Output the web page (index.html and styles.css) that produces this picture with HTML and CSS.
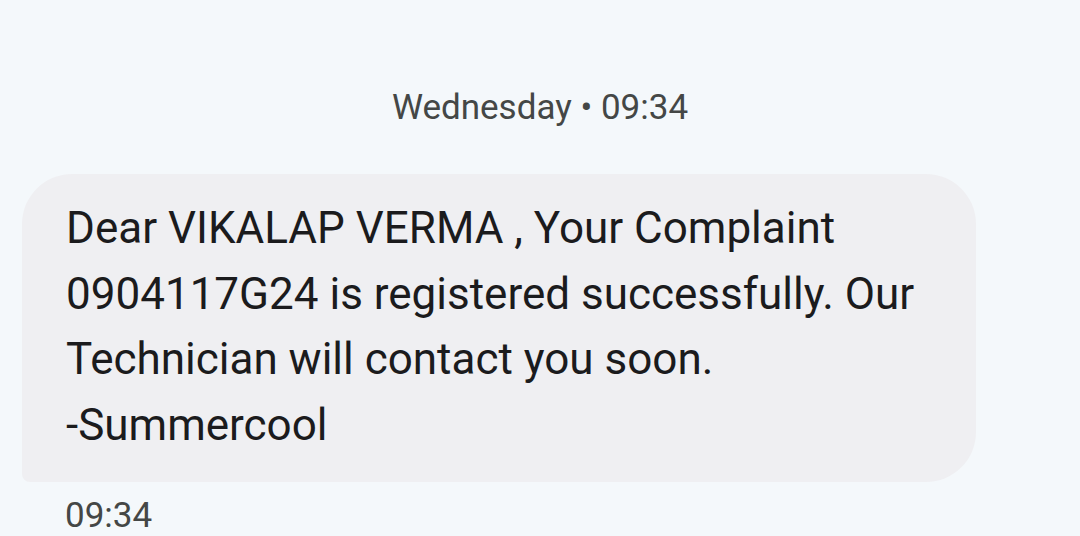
FILE: index.html
```html
<!DOCTYPE html>
<html>
<head>
<meta charset="utf-8">
<link rel="stylesheet" href="styles.css">
</head>
<body>
<div class="thread">
  <div class="day">Wednesday • 09:34</div>
  <div class="bubble">
    <div class="line">Dear VIKALAP VERMA , Your Complaint</div>
    <div class="line">0904117G24 is registered successfully. Our</div>
    <div class="line">Technician will contact you soon.</div>
    <div class="line">-Summercool</div>
  </div>
  <div class="time">09:34</div>
</div>
</body>
</html>
```
FILE: styles.css
```css
html, body {
  margin: 0;
  padding: 0;
  background: #f4f8fb;
}
.thread {
  width: 1080px;
  height: 536px;
  overflow: hidden;
  font-family: Roboto, "Noto Sans", sans-serif;
  display: flex;
  flex-direction: column;
  align-items: flex-start;
}
.day {
  align-self: stretch;
  text-align: center;
  padding-top: 88px;
  font-size: 35px;
  line-height: 40px;
  color: #444746;
}
.bubble {
  margin-top: 46px;
  margin-left: 22px;
  width: 954px;
  box-sizing: border-box;
  padding: 22px 20px 24px 44px;
  background: #efeff2;
  border-radius: 50px 50px 50px 8px;
  font-size: 44px;
  line-height: 65.5px;
  color: #1b1b1d;
}
.line {
  white-space: nowrap;
}
.time {
  margin-top: 14px;
  margin-left: 65px;
  font-size: 35px;
  line-height: 40px;
  color: #444746;
}
```
